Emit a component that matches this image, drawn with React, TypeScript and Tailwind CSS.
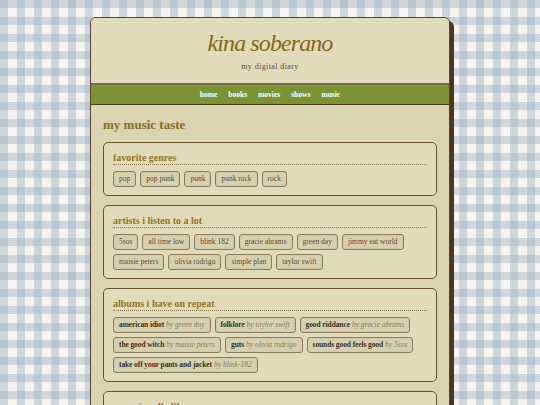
const genres = ["pop", "pop punk", "punk", "punk rock", "rock"];

const artists = [
  "5sos",
  "all time low",
  "blink 182",
  "gracie abrams",
  "green day",
  "jimmy eat world",
  "maisie peters",
  "olivia rodrigo",
  "simple plan",
  "taylor swift",
];

const albums = [
  { title: "american idiot", by: "green day" },
  { title: "folklore", by: "taylor swift" },
  { title: "good riddance", by: "gracie abrams" },
  { title: "the good witch", by: "maisie peters" },
  { title: "guts", by: "olivia rodrigo" },
  { title: "sounds good feels good", by: "5sos" },
  { title: "take off your pants and jacket", by: "blink-182" },
];

const navLinks = ["home", "books", "movies", "shows", "music"];

const Tag = ({ children }: { children: React.ReactNode }) => (
  <span className="inline-flex h-[16px] items-center rounded-[3px] border border-[#8c7c5f] bg-[#d7d1b1] px-[5px] text-[7.5px] leading-none text-[#5a4935] shadow-[inset_0_0_2px_rgba(90,70,40,0.15)]">
    {children}
  </span>
);

const Section = ({
  title,
  children,
}: {
  title: string;
  children: React.ReactNode;
}) => (
  <section className="rounded-[5px] border border-[#6a5033] bg-[#e1dbbc] px-[9px] pt-[8px] pb-[8px]">
    <h3 className="border-b border-dotted border-[#8a7850] text-[10px] font-bold leading-[13px] text-[#957621]">
      {title}
    </h3>
    <div className="mt-[6px] flex flex-wrap gap-x-[4px] gap-y-[4px]">
      {children}
    </div>
  </section>
);

export default function App() {
  return (
    <div className="min-h-screen bg-[#f5f4ef] bg-[image:linear-gradient(90deg,rgba(150,175,195,0.42)_50%,transparent_50%),linear-gradient(rgba(150,175,195,0.42)_50%,transparent_50%)] bg-size-[17px_17px] pt-[17px] pb-10 font-['Liberation_Serif',serif]">
      <div className="mx-auto w-[360px] overflow-hidden rounded-[6px] border border-[#5b4128] bg-[#dad4b3] shadow-[4px_4px_0_#4f3519]">
        {/* header */}
        <header className="bg-[#e1dbbc] pt-[10px] pb-[10px] text-center">
          <h1 className="text-[24px] italic leading-[30px] tracking-[-0.9px] text-[#876710]">
            kina soberano
          </h1>
          <p className="mt-[3px] text-[8px] leading-[12px] tracking-[0.4px] text-[#5a4a3a]">
            my digital diary
          </p>
        </header>

        <nav className="flex h-[22px] items-center justify-center gap-[11px] border-t-2 border-b border-t-[#76683a] border-b-[#4f3a1e] bg-[#7a9334] text-[7.5px] font-bold text-white">
          {navLinks.map((link) => (
            <a key={link} href="#">
              {link}
            </a>
          ))}
        </nav>

        <main className="px-[12px] pt-[12px] pb-[12px]">
          <h2 className="text-[13px] font-bold leading-[16px] text-[#8b6c1f]">
            my music taste
          </h2>

          <div className="mt-[9px] flex flex-col gap-[9px]">
            <Section title="favorite genres">
              {genres.map((g) => (
                <Tag key={g}>{g}</Tag>
              ))}
            </Section>

            <Section title="artists i listen to a lot">
              {artists.map((a) => (
                <Tag key={a}>{a}</Tag>
              ))}
            </Section>

            <Section title="albums i have on repeat">
              {albums.map((album) => (
                <Tag key={album.title}>
                  <b className="tracking-[-0.1px] text-[#3d2e1c]">
                    {album.title}
                  </b>
                  <i className="ml-[2px] text-[#8a7a5c]">by {album.by}</i>
                </Tag>
              ))}
            </Section>

            <Section title="songs i really like">
              <Tag>song</Tag>
            </Section>
          </div>
        </main>
      </div>
    </div>
  );
}
